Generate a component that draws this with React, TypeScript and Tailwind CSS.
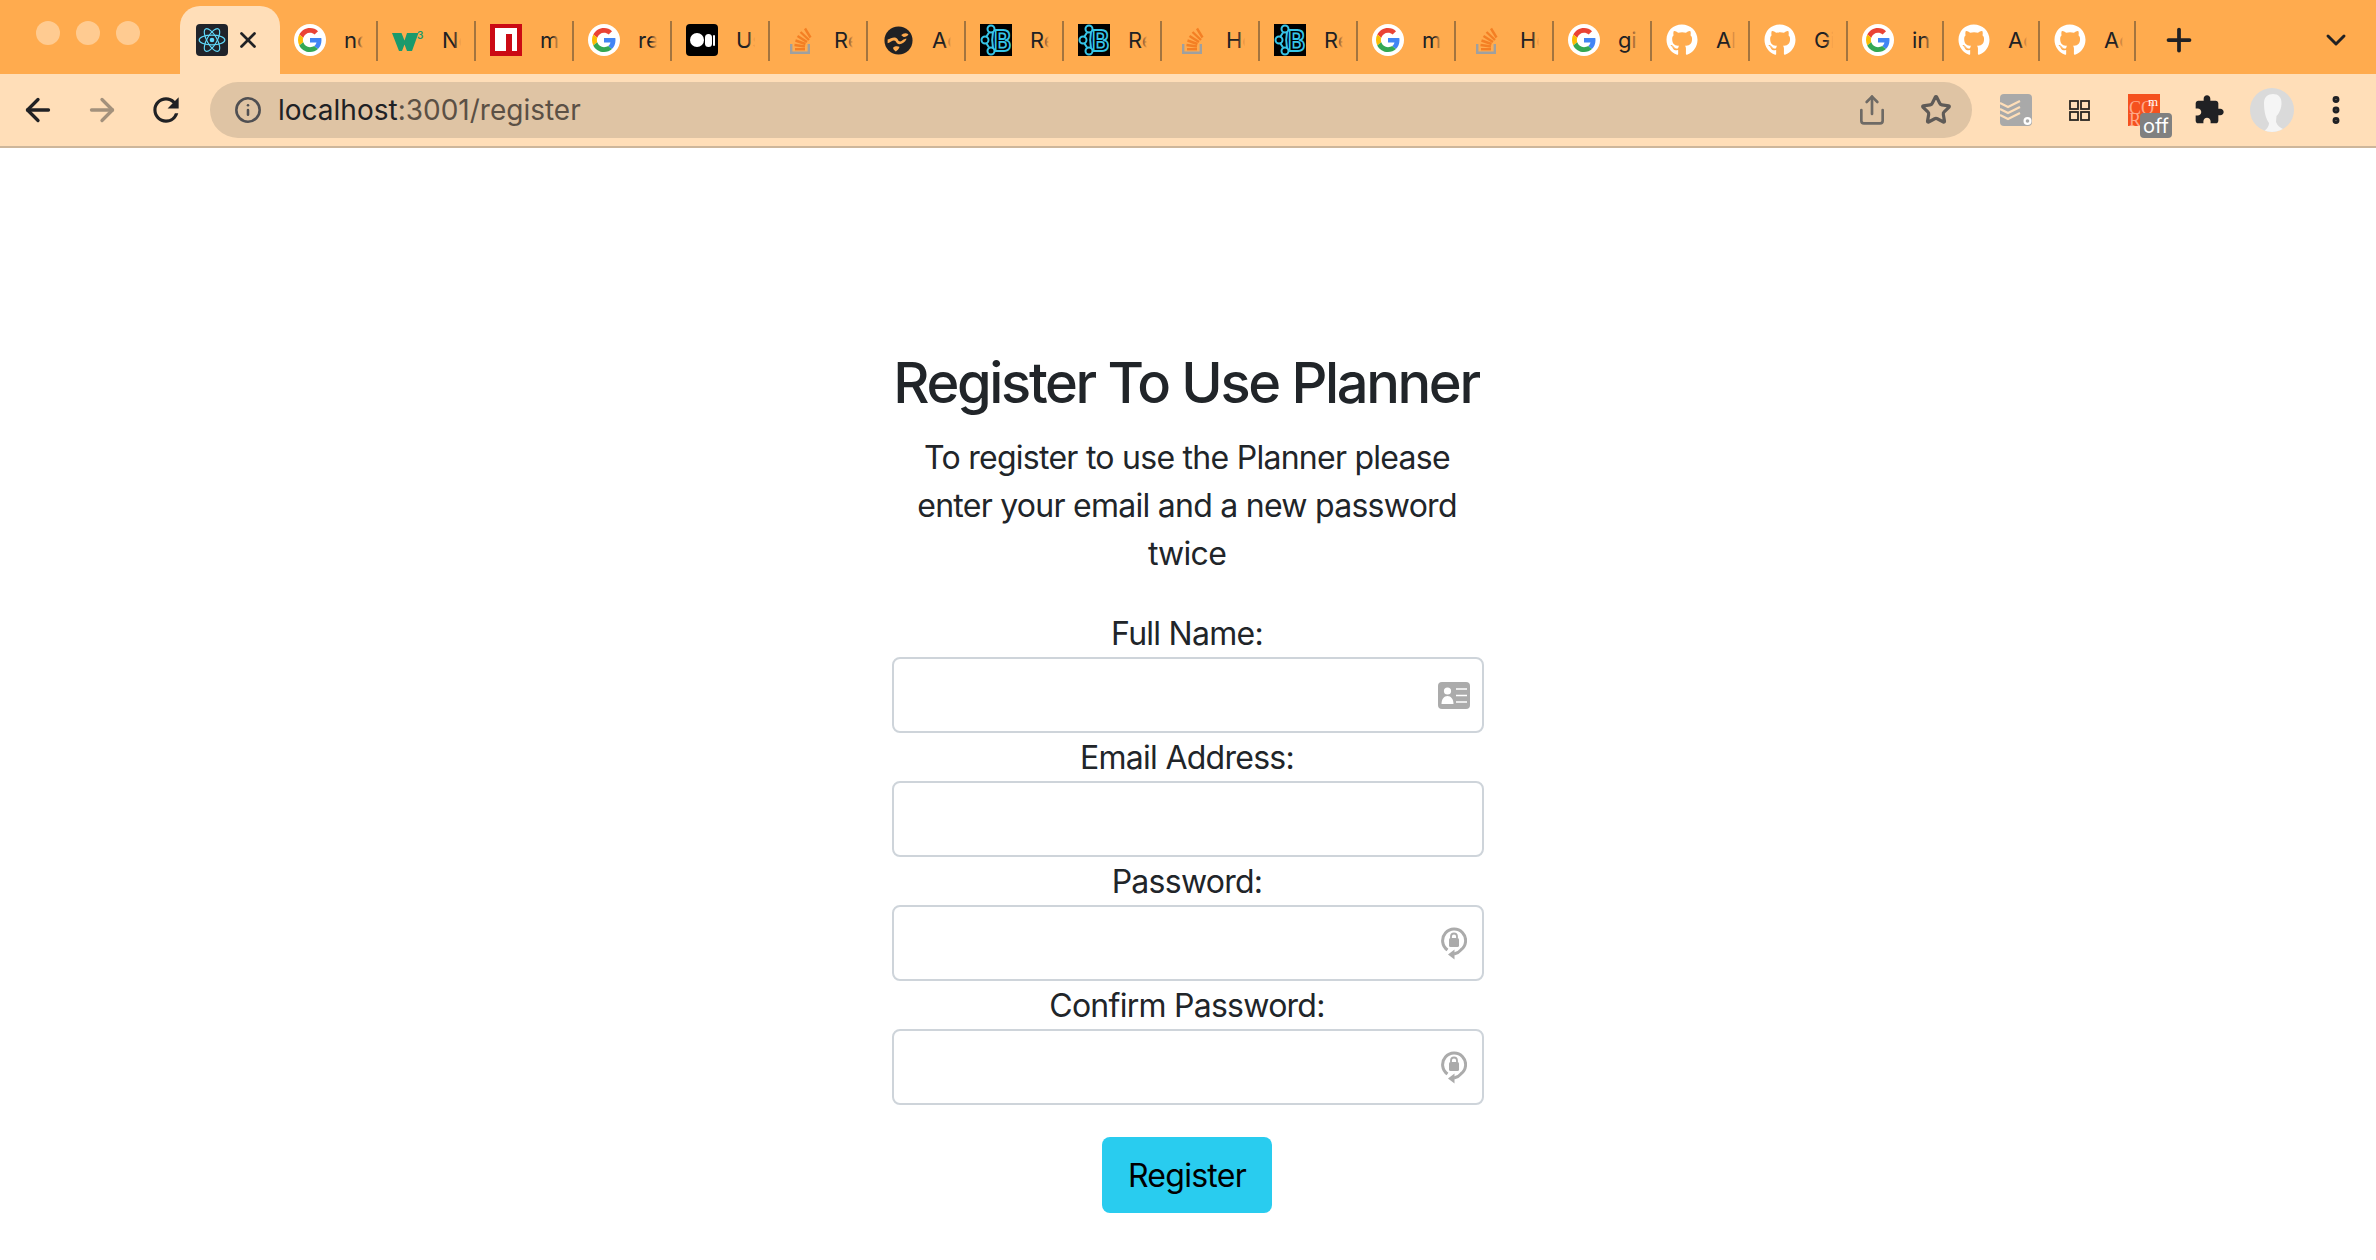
import { ArrowLeft, ArrowRight, ChevronDown, Info, MoreVertical, Plus, Share, Star, X } from "lucide-react";
import { FaGithub } from "react-icons/fa";

type Kind = "google" | "w3" | "npm" | "medium" | "so" | "globe" | "rb" | "github";

const TABS: { kind: Kind; title: string; narrow?: boolean }[] = [
  { kind: "google", title: "no" },
  { kind: "w3", title: "Ne" },
  { kind: "npm", title: "m" },
  { kind: "google", title: "re" },
  { kind: "medium", title: "Us" },
  { kind: "so", title: "Re" },
  { kind: "globe", title: "Ac" },
  { kind: "rb", title: "Re" },
  { kind: "rb", title: "Re" },
  { kind: "so", title: "Ho" },
  { kind: "rb", title: "Re" },
  { kind: "google", title: "m" },
  { kind: "so", title: "Ho" },
  { kind: "google", title: "gi" },
  { kind: "github", title: "Al" },
  { kind: "github", title: "Gi" },
  { kind: "google", title: "in", narrow: true },
  { kind: "github", title: "Ac", narrow: true },
  { kind: "github", title: "Ac", narrow: true },
];

function Favicon({ kind }: { kind: Kind }) {
  if (kind === "google") {
    return (
      <div className="flex h-8 w-8 items-center justify-center rounded-full bg-white">
        <svg viewBox="0 0 48 48" className="h-6 w-6">
          <path fill="#EA4335" d="M24 9.5c3.54 0 6.71 1.22 9.21 3.6l6.85-6.85C35.9 2.38 30.47 0 24 0 14.62 0 6.51 5.38 2.56 13.22l7.98 6.19C12.43 13.72 17.74 9.5 24 9.5z" />
          <path fill="#4285F4" d="M46.98 24.55c0-1.57-.15-3.09-.38-4.55H24v9.02h12.94c-.58 2.96-2.26 5.48-4.78 7.18l7.73 6c4.51-4.18 7.09-10.36 7.09-17.65z" />
          <path fill="#FBBC05" d="M10.53 28.59c-.48-1.45-.76-2.99-.76-4.59s.27-3.14.76-4.59l-7.98-6.19C.92 16.46 0 20.12 0 24c0 3.88.92 7.54 2.56 10.78l7.97-6.19z" />
          <path fill="#34A853" d="M24 48c6.48 0 11.93-2.13 15.89-5.81l-7.73-6c-2.15 1.45-4.92 2.3-8.16 2.3-6.26 0-11.57-4.22-13.47-9.91l-7.98 6.19C6.51 42.62 14.62 48 24 48z" />
        </svg>
      </div>
    );
  }
  if (kind === "w3") {
    return (
      <svg viewBox="0 0 32 32" className="h-8 w-8">
        <path fill="#1A9A6C" d="M0 9h9.5l3 7.5 2.5-7.5h11.5l-6.5 18h-5l-2.5-6.5-2.5 6.5H7z" />
        <text x="25" y="15" fontSize="10" fontWeight="600" fill="#1A9A6C" fontFamily="Inter, sans-serif">3</text>
      </svg>
    );
  }
  if (kind === "npm") {
    return (
      <div className="flex h-8 w-8 items-end justify-center bg-[#CB0A14] pb-[5px]">
        <div className="flex h-[23px] w-[22px] justify-end bg-white pr-[5px]">
          <div className="mt-[6px] h-[17px] w-[6px] bg-[#CB0A14]" />
        </div>
      </div>
    );
  }
  if (kind === "medium") {
    return (
      <div className="flex h-8 w-8 items-center justify-center gap-[1px] rounded-[4px] bg-black">
        <div className="h-[14px] w-[14px] rounded-full bg-white" />
        <div className="h-[13px] w-[7px] rounded-full bg-white" />
        <div className="h-[11px] w-[2px] rounded-full bg-white" />
      </div>
    );
  }
  if (kind === "so") {
    return (
      <svg viewBox="0 0 32 32" className="h-8 w-8">
        <path fill="none" stroke="#9FA0A0" strokeWidth="2.4" d="M7.2 20v8.8h17.6V20" />
        <g stroke="#F47F24" strokeWidth="2.4">
          <path d="M11 25.2h10" />
          <path d="M10.5 21l10.5 1.5" />
          <path d="M11.5 16.5l10 3.5" />
          <path d="M13.5 12l9.5 6" />
          <path d="M16.5 8l8.5 8" />
          <path d="M21 4.5l5.5 9" />
        </g>
      </svg>
    );
  }
  if (kind === "globe") {
    return (
      <svg viewBox="0 0 32 32" className="h-[29px] w-[29px]">
        <circle cx="16" cy="16" r="15.5" fill="#202124" />
        <path fill="#FFAB4E" d="M4 15c3-1 6-3 9-2 3 1 2 4 5 4 2 0 3-3 7-3-2 4-5 6-8 6-4 0-3-4-6-4-2 0-4 2-7 3zM19 10c2-2 5-3 8-1-1 2-3 3-5 3-1 0-2-1-3-2zM10 24c2-2 5-2 7-1 0 2-3 5-4 5-1-1-3-2-3-4z" />
      </svg>
    );
  }
  if (kind === "rb") {
    return (
      <svg viewBox="0 0 32 32" className="h-8 w-8 bg-black">
        <g fill="none" stroke="#36C5E8" strokeWidth="2">
          <circle cx="11" cy="5" r="3.5" />
          <circle cx="5" cy="16" r="3.5" />
          <circle cx="11" cy="27" r="3.5" />
          <path d="M9 8.5l-2.5 4M6.5 19.5l2.5 4M13 8c-1 5-1 11 0 16" />
        </g>
        <text x="14" y="26.5" fontSize="28" fontWeight="700" fill="none" stroke="#36C5E8" strokeWidth="1.8" fontFamily="Inter, sans-serif" textLength="17" lengthAdjust="spacingAndGlyphs">B</text>
      </svg>
    );
  }
  return <FaGithub className="h-8 w-8 text-white" />;
}

function Tab({ kind, title, narrow }: { kind: Kind; title: string; narrow?: boolean }) {
  return (
    <div className={`relative flex h-[74px] shrink-0 items-center pl-[14px] pt-[6px] ${narrow ? "w-[96px]" : "w-[98px]"}`}>
      <div className={`absolute top-[21px] h-10 w-[2px] bg-[#A3743F] ${narrow ? "left-[94px]" : "left-[96px]"}`} />
      <div className="flex h-8 w-8 shrink-0 items-center justify-center">
        <Favicon kind={kind} />
      </div>
      <div className="relative ml-[18px] h-[30px] w-[19px] overflow-hidden whitespace-nowrap text-[22px] leading-[30px] text-[#202124]">
        {title}
        <div className="absolute right-0 top-0 h-full w-[7px] bg-gradient-to-r from-transparent to-[#FFAB4E]" />
      </div>
    </div>
  );
}

function ToolIcon({ children, className }: { children: React.ReactNode; className: string }) {
  return <div className={`flex shrink-0 items-center justify-center ${className}`}>{children}</div>;
}

function IdCardIcon() {
  return (
    <svg viewBox="0 0 32 27" className="h-[27px] w-8">
      <rect width="32" height="27" rx="4" fill="#ABABAB" />
      <circle cx="9.5" cy="9" r="3.6" fill="#fff" />
      <path fill="#fff" d="M3.5 22c0-5 2.5-8 6-8s6 3 6 8z" />
      <path stroke="#fff" strokeWidth="1.6" d="M18 7h11M18 13.500h11M18 20h11" />
    </svg>
  );
}

function PasswordIcon() {
  return (
    <svg viewBox="0 0 26 33" className="mr-[3px] h-[33px] w-[26px]">
      <path fill="none" stroke="#ABABAB" strokeWidth="3" d="M6.500 23A11.500 11.500 0 1 1 20 22.800Q17.500 26 13 27" />
      <path fill="#ABABAB" d="M13.500 22.500v10l-6.500-5z" />
      <rect x="8" y="11" width="10" height="9" rx="1.500" fill="#ABABAB" />
      <path fill="none" stroke="#ABABAB" strokeWidth="1.800" d="M10 11V9.500a3 3 0 0 1 6 0V11" />
    </svg>
  );
}

function Field({ label, icon }: { label: string; icon?: React.ReactNode }) {
  return (
    <div>
      <label className="block h-12 pr-[2px] pt-px text-center text-[32px] leading-[48px] tracking-[-0.023em]">{label}</label>
      <div className="relative">
        <input className="block h-[76px] w-full rounded-lg border-2 border-[#CED4DA] bg-white px-6" />
        {icon && <div className="absolute right-[14px] top-0 flex h-full items-center">{icon}</div>}
      </div>
    </div>
  );
}

export default function App() {
  return (
    <div className="min-h-[1260px] bg-white font-['Inter',sans-serif] text-[#212529]">
      <div className="flex h-[74px] bg-[#FFAB4E]">
        <div className="flex w-[180px] shrink-0 gap-4 pl-9 pt-[21px]">
          <div className="h-6 w-6 rounded-full bg-[#FFCB91]" />
          <div className="h-6 w-6 rounded-full bg-[#FFCB91]" />
          <div className="h-6 w-6 rounded-full bg-[#FFCB91]" />
        </div>
        <div className="mt-[6px] flex h-[68px] w-[100px] shrink-0 items-center rounded-t-[20px] bg-[#FFDEB8] pl-4">
          <div className="flex h-8 w-8 items-center justify-center rounded-[4px] bg-[#20232A]">
            <svg viewBox="-12 -11 24 22" className="h-7 w-7">
              <g fill="none" stroke="#61DAFB" strokeWidth="1">
                <ellipse rx="11" ry="4.2" />
                <ellipse rx="11" ry="4.2" transform="rotate(60)" />
                <ellipse rx="11" ry="4.2" transform="rotate(120)" />
              </g>
              <circle r="2" fill="#61DAFB" />
            </svg>
          </div>
          <X className="ml-[7px] h-[26px] w-[26px] text-[#202124]" strokeWidth={2.5} />
        </div>
        {TABS.map((t, i) => (
          <Tab key={i} kind={t.kind} title={t.title} narrow={t.narrow} />
        ))}
        <div className="flex h-[74px] w-[86px] shrink-0 items-center justify-center pt-[6px]">
          <Plus className="h-9 w-9 text-[#202124]" strokeWidth={2.5} />
        </div>
        <div className="flex h-[74px] flex-1 items-center justify-center pl-[74px] pt-[6px]">
          <ChevronDown className="h-8 w-8 text-[#202124]" strokeWidth={2.2} />
        </div>
      </div>

      <div className="flex h-[74px] items-center border-b-2 border-[#CDB69B] bg-[#FFDEB8]">
        <ToolIcon className="ml-[18px] w-10">
          <ArrowLeft className="h-9 w-9 text-[#202124]" strokeWidth={2.2} />
        </ToolIcon>
        <ToolIcon className="ml-6 w-10">
          <ArrowRight className="h-9 w-9 text-[#A3917C]" strokeWidth={2.2} />
        </ToolIcon>
        <ToolIcon className="ml-6 w-10">
          <svg viewBox="0 0 24 24" className="h-[38px] w-[38px]">
            <path fill="#202124" d="M17.650 6.350A7.958 7.958 0 0 0 12 4c-4.420 0-7.990 3.580-7.990 8s3.570 8 7.990 8c3.730 0 6.840-2.550 7.730-6h-2.080A5.990 5.990 0 0 1 12 18c-3.310 0-6-2.690-6-6s2.690-6 6-6c1.660 0 3.140.690 4.220 1.780L13 11h7V4l-2.350 2.350z" />
          </svg>
        </ToolIcon>
        <div className="ml-6 flex h-14 w-[1762px] shrink-0 items-center rounded-full bg-[#DFC4A4] pl-6 pr-5">
          <Info className="h-7 w-7 text-[#4F4F52]" strokeWidth={2.2} />
          <div className="ml-[16px] flex-1 text-[28px] text-[#5B5045]">
            <span className="text-[#202124]">localhost</span>:3001/register
          </div>
          <Share className="h-8 w-8 text-[#6E6A65]" strokeWidth={2} />
          <Star className="ml-[32px] h-8 w-8 text-[#5F5B57]" strokeWidth={2.4} />
        </div>
        <ToolIcon className="ml-7 h-8 w-8 rounded-[4px] bg-[#A9A9A9]">
          <svg viewBox="0 0 32 32" className="h-8 w-8">
            <path fill="none" stroke="#FFDEB8" strokeWidth="2.2" d="M0 9l8 4 12-6M0 15l8 4 12-6M0 21l8 4 12-6" />
            <circle cx="27.500" cy="27" r="4" fill="#fff" />
            <circle cx="27.500" cy="27" r="1.800" fill="#A9A9A9" />
          </svg>
        </ToolIcon>
        <ToolIcon className="ml-[31px] h-8 w-8">
          <svg viewBox="0 0 21 21" className="h-[21px] w-[21px]">
            <g fill="none" stroke="#2A2622" strokeWidth="1.800">
              <rect x="1" y="1" width="8" height="8" />
              <rect x="12" y="1" width="8" height="8" />
              <rect x="1" y="12" width="8" height="8" />
              <rect x="12" y="12" width="8" height="8" />
            </g>
          </svg>
        </ToolIcon>
        <div className="relative ml-[33px] h-8 w-8 shrink-0 bg-[#F5511E] font-['Liberation_Serif',serif] text-[18px] leading-[14px] text-[#FFA98A]">
          <span className="absolute left-[1px] top-[7px]">CO</span>
          <span className="absolute right-[2px] top-px text-[13px] leading-none text-white">m</span>
          <span className="absolute left-[1px] top-[19px]">R</span>
          <div className="absolute left-3 top-[19px] flex h-[25px] w-8 items-center justify-center rounded-[4px] bg-[#808080] font-['Inter',sans-serif] text-[20px] text-white">off</div>
        </div>
        <ToolIcon className="ml-[33px] h-8 w-8">
          <svg viewBox="0 0 24 24" className="h-8 w-8">
            <path fill="#202124" d="M20.500 11H19V7c0-1.100-.9-2-2-2h-4V3.500C13 2.120 11.880 1 10.500 1S8 2.120 8 3.500V5H4c-1.100 0-1.990.9-1.990 2v3.800H3.500c1.490 0 2.700 1.210 2.700 2.700s-1.210 2.700-2.700 2.700H2V20c0 1.100.9 2 2 2h3.800v-1.500c0-1.490 1.210-2.700 2.700-2.700 1.490 0 2.700 1.210 2.700 2.700V22H17c1.100 0 2-.9 2-2v-4h1.500c1.380 0 2.500-1.120 2.500-2.500S21.880 11 20.500 11z" />
          </svg>
        </ToolIcon>
        <div className="ml-[25px] h-11 w-11 shrink-0 overflow-hidden rounded-full bg-[#DADADA]">
          <svg viewBox="0 0 44 44" className="h-11 w-11">
            <path fill="#F5F5F5" d="M14 15c0-6 4-9 9-9s9 3 8.500 10c-.5 6-3 10-5 12l-.5 6c1.500 4 5 6 7 7v3H13c3-2 6-5 6-9-3-4-5-11-5-20z" />
          </svg>
        </div>
        <ToolIcon className="ml-6 w-9">
          <MoreVertical className="h-9 w-9 text-[#202124]" strokeWidth={2.6} />
        </ToolIcon>
      </div>

      <div className="mx-auto w-[592px] pt-[202px]">
        <h1 className="whitespace-nowrap pr-[4px] text-center text-[56px] font-medium leading-[67px] tracking-[-0.042em]">Register To Use Planner</h1>
        <p className="mt-[17px] pr-[2px] text-center text-[32px] leading-[48px] tracking-[-0.023em]">
          To register to use the Planner please enter your email and a new password twice
        </p>
        <div className="mt-[31px]">
          <Field label="Full Name:" icon={<IdCardIcon />} />
          <Field label="Email Address:" />
          <Field label="Password:" icon={<PasswordIcon />} />
          <Field label="Confirm Password:" icon={<PasswordIcon />} />
        </div>
        <div className="mt-8 flex justify-center pr-[2px]">
          <button className="h-[76px] w-[170px] rounded-lg bg-[#29CCEF] pt-[2px] text-[32px] tracking-[-0.023em] text-black">Register</button>
        </div>
      </div>
    </div>
  );
}
